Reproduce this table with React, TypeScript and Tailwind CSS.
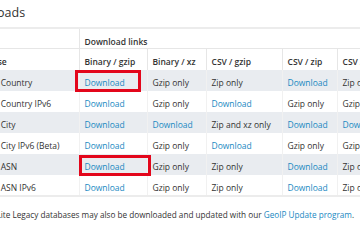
import React from "react";

type Cell = { t: string; link?: boolean };

const L = (t = "Download"): Cell => ({ t, link: true });
const T = (t: string): Cell => ({ t });

const rows: { name: string; cells: Cell[]; box?: "a" | "b" }[] = [
  { name: "GeoLite Country", cells: [L(), T("Gzip only"), T("Zip only"), L(), T("Zip only")], box: "a" },
  { name: "GeoLite Country IPv6", cells: [L(), T("Gzip only"), L(), T("Gzip only"), T("Gzip only")] },
  { name: "GeoLite City", cells: [L(), L(), T("Zip and xz only"), L(), L()] },
  { name: "GeoLite City IPv6 (Beta)", cells: [L(), T("Gzip only"), L(), T("Gzip only"), T("Gzip only")] },
  { name: "GeoLite ASN", cells: [L(), T("Gzip only"), T("Zip only"), L(), T("Zip only")], box: "b" },
  { name: "GeoLite ASN IPv6", cells: [L(), T("Gzip only"), T("Zip only"), L(), T("Zip only")] },
];

const heads = ["Binary / gzip", "Binary / xz", "CSV / gzip", "CSV / zip", "CSV / xz"];

const cellBase = "align-top pt-[6px] pb-0 leading-[13px] px-[5px] whitespace-nowrap";

export default function App() {
  return (
    <div className="w-[360px] h-[240px] overflow-hidden bg-white text-[#333] font-['Open_Sans',sans-serif]">
      <h2 className="-ml-[40px] h-[27px] pt-[5px] text-[12.5px] leading-[16px] font-normal whitespace-nowrap">
        Downloads
      </h2>
      <div className="-ml-[37px]">
        <table className="table-fixed border-collapse border-t-2 border-b-2 border-[#ececec] text-[8.5px] w-[444px]">
          <colgroup>
            <col className="w-[116px]" />
            <col className="w-[68px]" />
            <col className="w-[59px]" />
            <col className="w-[76px]" />
            <col className="w-[55px]" />
            <col className="w-[70px]" />
          </colgroup>
          <thead>
            <tr className="h-[20px] border-b border-[#e6e6e6]">
              <th className={`${cellBase} border-r border-[#e6e6e6]`}></th>
              <th colSpan={5} className={`${cellBase} text-left font-semibold`}>
                Download links
              </th>
            </tr>
            <tr className="h-[21px]">
              <th className={`${cellBase} text-left font-semibold border-r border-[#e6e6e6]`}>
                Database
              </th>
              {heads.map((h) => (
                <th
                  key={h}
                  className={`${cellBase} text-left font-semibold border-x border-[#e6e6e6]`}
                >
                  {h}
                </th>
              ))}
            </tr>
          </thead>
          <tbody>
            {rows.map((r, i) => (
              <tr key={r.name} className={`h-[21px] ${i % 2 === 0 ? "bg-[#e9ecf0]" : "bg-white"}`}>
                <td className={`${cellBase} border-r border-[#f1f1f1]`}>{r.name}</td>
                {r.cells.map((c, j) => (
                  <td key={j} className={`${cellBase} relative border-x border-[#f1f1f1]`}>
                    {c.link ? <span className="text-[#1a89c2]">{c.t}</span> : c.t}
                    {j === 0 && r.box === "a" && (
                      <span className="absolute left-[-5px] top-0 w-[66px] h-[22px] border-[3px] border-[#e3061b]" />
                    )}
                    {j === 0 && r.box === "b" && (
                      <span className="absolute left-[-1px] top-[1px] w-[72px] h-[21px] border-[3px] border-[#e3061b]" />
                    )}
                  </td>
                ))}
              </tr>
            ))}
          </tbody>
        </table>
      </div>
      <p className="-ml-[19px] mt-[12px] text-[8.2px] leading-[12px] whitespace-nowrap">
        GeoLite Legacy databases may also be downloaded and updated with our{" "}
        <span className="text-[#1a89c2]">GeoIP Update program</span>.
      </p>
    </div>
  );
}
